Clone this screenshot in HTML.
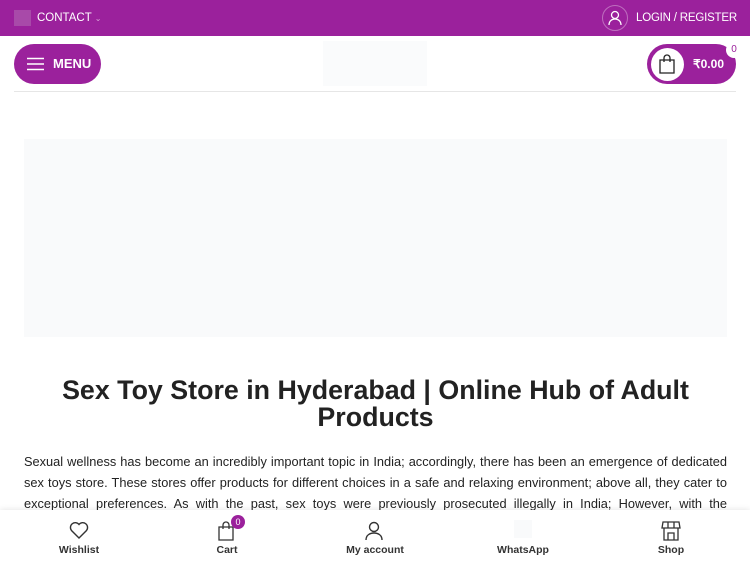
<!DOCTYPE html>
<html><head><style>
*{margin:0;padding:0;box-sizing:border-box}
body{width:750px;height:563px;overflow:hidden;font-family:"Liberation Sans",sans-serif;background:#fff;position:relative}
.top{height:36px;background:#9b219c;position:relative;color:#fff;font-size:11.5px}
.abs{position:absolute}
p.t{position:absolute;left:24px;width:703px;top:451px;font-size:12.8px;line-height:21px;color:#222;text-align:justify;text-align-last:justify}
.nav{position:absolute;bottom:0;left:0;width:750px;height:53px;background:#fff;box-shadow:0 0 6px rgba(0,0,0,.12)}
.nav div{position:absolute;top:34px;font-size:10.5px;font-weight:bold;color:#333;transform:translateX(-50%)}
.nav svg{position:absolute;top:11px}
</style></head><body>
<div class="top">
<div class="abs" style="left:14px;top:10px;width:17px;height:16px;background:#a84aa9"></div>
<div class="abs" style="left:37px;top:12px">CONTACT <span style="font-size:8px;opacity:.6">&#8964;</span></div>
<div class="abs" style="left:602px;top:5px;width:26px;height:26px;border:1px solid rgba(255,255,255,.35);border-radius:50%"></div>
<svg class="abs" style="left:608px;top:10px" width="14" height="16" viewBox="0 0 14 16" fill="none" stroke="#fff" stroke-width="1.3"><circle cx="7" cy="5" r="3.5"/><path d="M1 15c0-4 3-6 6-6s6 2 6 6"/></svg>
<div class="abs" style="left:636px;top:12px;letter-spacing:-0.2px">LOGIN / REGISTER</div>
</div>
<div class="abs" style="left:14px;top:44px;width:87px;height:40px;background:#9b219c;border-radius:20px"></div>
<svg class="abs" style="left:27px;top:57px" width="17" height="14" stroke="#fff" stroke-width="1.6"><path d="M0 1.5h17M0 7h17M0 12.5h17"/></svg>
<div class="abs" style="left:53px;top:56px;color:#fff;font-weight:bold;font-size:13px">MENU</div>
<div class="abs" style="left:323px;top:41px;width:104px;height:45px;background:#fafbfc"></div>
<div class="abs" style="left:647px;top:44px;width:89px;height:40px;background:#9b219c;border-radius:20px"></div>
<div class="abs" style="left:651px;top:48px;width:33px;height:33px;background:#fff;border-radius:50%"></div>
<svg class="abs" style="left:658px;top:54px" width="18" height="20" fill="none" stroke="#222" stroke-width="1.3"><path d="M2 6h14v13H2z M6 8V4a3 3 0 016 0v4"/></svg>
<div class="abs" style="left:693px;top:57px;color:#fff;font-weight:bold;font-size:12px">₹0.00</div>
<div class="abs" style="left:726px;top:42px;width:16px;height:16px;background:#fff;border-radius:50%;color:#9b219c;font-size:10px;text-align:center;line-height:16px">0</div>
<div class="abs" style="left:14px;top:91px;width:722px;height:1px;background:#e6e6e6"></div>
<div class="abs" style="left:24px;top:139px;width:703px;height:198px;background:#f9fafb"></div>
<h1 class="abs" style="left:24px;width:703px;top:377px;text-align:center;font-size:26.8px;line-height:27px;color:#222">Sex Toy Store in Hyderabad | Online Hub of Adult Products</h1>
<p class="t">Sexual wellness has become an incredibly important topic in India; accordingly, there has been an emergence of dedicated sex toys store. These stores offer products for different choices in a safe and relaxing environment; above all, they cater to exceptional preferences. As with the past, sex toys were previously prosecuted illegally in India; However, with the</p>
<div class="nav">
<svg style="left:69px" width="20" height="18" fill="none" stroke="#333" stroke-width="1.4"><path d="M10 17L2.5 9.5A4.5 4.5 0 0110 3.5a4.5 4.5 0 017.5 6z"/></svg><div style="left:79px">Wishlist</div>
<svg style="left:218px" width="18" height="20" fill="none" stroke="#333" stroke-width="1.3"><path d="M1 6h14v13H1z M5 8V4a3 3 0 016 0v4"/></svg>
<div style="left:231px;top:5px;width:14px;height:14px;background:#9b219c;border-radius:50%;color:#fff;font-size:9px;text-align:center;line-height:14px;transform:none;font-weight:normal">0</div>
<div style="left:227px">Cart</div>
<svg style="left:365px" width="18" height="20" fill="none" stroke="#333" stroke-width="1.4"><circle cx="9" cy="6" r="4.5"/><path d="M1 19c0-5 4-7 8-7s8 2 8 7"/></svg><div style="left:375px">My account</div>
<div style="left:523px;top:10px;width:18px;height:18px;background:#f9fafb"></div><div style="left:523px">WhatsApp</div>
<svg style="left:661px" width="20" height="20" fill="none" stroke="#333" stroke-width="1.3"><path d="M2 1h16l1 6H1z M3 7v12h14V7 M7 19v-7h6v7 M7 1v6 M13 1v6"/></svg><div style="left:671px">Shop</div>
</div>
</body></html>
